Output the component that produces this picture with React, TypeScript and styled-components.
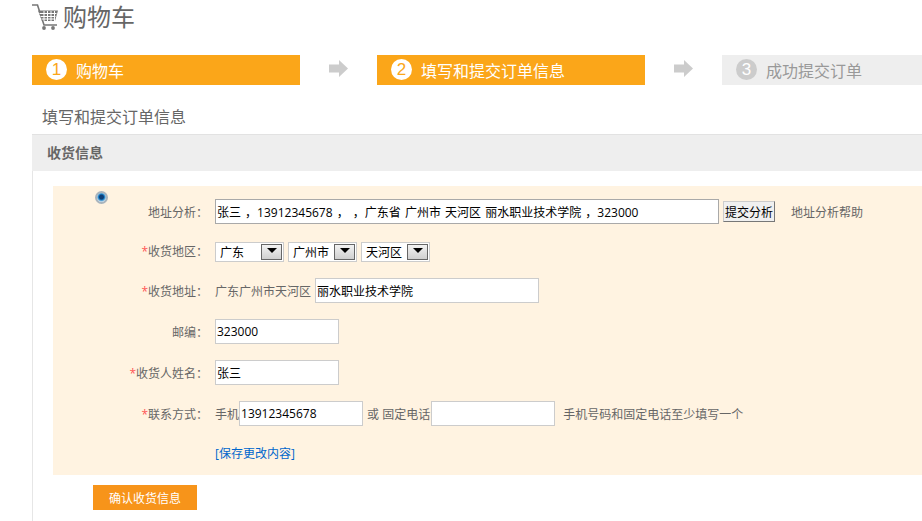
import React from 'react'
import styled, { createGlobalStyle } from 'styled-components'

const GlobalStyle = createGlobalStyle`
  html, body {
    margin: 0;
    height: 100%;
    overflow: hidden;
    background: #fff;
  }
  body {
    font-family: "Open Sans", "Noto Sans CJK SC", sans-serif;
    font-size: 12px;
    color: #666;
  }
`

const Page = styled.div`
  width: 1100px;
  height: 521px;
  padding-left: 32px;
  box-sizing: border-box;
  display: flex;
  flex-direction: column;
`

const TitleRow = styled.header`
  height: 55px;
  display: flex;
  align-items: flex-start;
  gap: 4px;
  padding-top: 4px;
  box-sizing: border-box;
`

const Title = styled.h1`
  margin: 0;
  font-size: 24px;
  line-height: 26px;
  font-weight: 400;
  color: #666;
`

const Steps = styled.nav`
  display: flex;
  height: 30px;
`

const Step = styled.div<{ $active?: boolean }>`
  width: 268px;
  display: flex;
  align-items: center;
  gap: 9px;
  padding-left: 14px;
  padding-bottom: 1px;
  box-sizing: border-box;
  font-size: 16px;
  background: ${(p) => (p.$active ? '#fba619' : '#eeeeee')};
  color: ${(p) => (p.$active ? '#fff' : '#999')};
`

const StepNumber = styled.span<{ $active?: boolean }>`
  width: 21px;
  height: 21px;
  border-radius: 50%;
  display: flex;
  align-items: center;
  justify-content: center;
  font-family: "Liberation Sans", sans-serif;
  font-size: 17px;
  background: ${(p) => (p.$active ? '#fff' : '#ccc')};
  color: ${(p) => (p.$active ? '#fba619' : '#fff')};
`

const StepArrow = styled.div`
  width: 77px;
  display: flex;
  align-items: center;
  justify-content: center;
  padding-bottom: 3px;
  box-sizing: border-box;
`

const SubTitle = styled.h2`
  margin: 0;
  height: 49px;
  padding: 22px 0 0 10px;
  box-sizing: border-box;
  font-size: 16px;
  line-height: 20px;
  font-weight: 400;
  color: #666;
`

const Section = styled.section`
  flex: 1;
  border-left: 1px solid #e6e6e6;
`

const SectionHeader = styled.div`
  height: 37px;
  margin-left: -1px;
  padding-left: 15px;
  box-sizing: border-box;
  border-top: 1px solid #e2e2e2;
  background: #eeeeee;
  font-size: 14px;
  font-weight: 700;
  line-height: 36px;
  color: #666;
`

const SectionBody = styled.div`
  padding: 15px 0 0 20px;
`

const Panel = styled.div`
  height: 289px;
  display: flex;
  background: #fff3e1;
`

const Radio = styled.span`
  flex: none;
  width: 13px;
  height: 13px;
  margin: 5px 0 0 42px;
  box-sizing: border-box;
  border-radius: 50%;
  border: 2px solid #a9b4bd;
  background: radial-gradient(circle at 50% 45%, #0f3f78 0 2px, #1c82c8 3px, #e8f0f5 5px);
`

const Form = styled.div`
  padding-top: 13px;
  display: flex;
  flex-direction: column;
  gap: 16px;
`

const Row = styled.div<{ $height?: number }>`
  display: flex;
  align-items: center;
  height: ${(p) => p.$height ?? 25}px;
`

const Label = styled.label`
  flex: none;
  width: 100px;
  margin-right: 7px;
  text-align: right;
  color: #666;
`

const Star = styled.span`
  color: #f55;
`

const Input = styled.input<{ $width: number; $dark?: boolean }>`
  width: ${(p) => p.$width}px;
  height: 25px;
  padding: 0 1px;
  box-sizing: border-box;
  border: 1px solid ${(p) => (p.$dark ? '#a9a9a9' : '#cccccc')};
  background: #fff;
  color: #000;
  font: inherit;
  word-spacing: 1px;
  outline: none;
`

const AnalyzeButton = styled.button`
  width: 52px;
  height: 21px;
  margin-left: 4px;
  padding: 3px 0 0;
  box-sizing: border-box;
  border: 1px solid #777;
  border-top-color: #ccc;
  border-left-color: #ccc;
  background: #f0f0f0;
  color: #000;
  font: inherit;
  line-height: 16px;
  overflow: hidden;
`

const Hint = styled.span<{ $left?: number; $right?: number }>`
  margin-left: ${(p) => p.$left ?? 0}px;
  margin-right: ${(p) => p.$right ?? 0}px;
  white-space: nowrap;
  color: #666;
`

const FakeSelect = styled.div`
  width: 69px;
  height: 20px;
  margin: 2px 4px 0 0;
  padding: 0 1px 0 4px;
  box-sizing: border-box;
  border: 1px solid #cccccc;
  background: #fff;
  color: #000;
  display: flex;
  align-items: center;
  justify-content: space-between;
`

const SelectArrow = styled.span`
  width: 21px;
  height: 16px;
  box-sizing: border-box;
  border: 1px solid #666;
  background: linear-gradient(#f2f2f2, #cfcfcf);
  display: flex;
  align-items: center;
  justify-content: center;
  padding-bottom: 3px;
  &::before {
    content: '';
    border-style: solid;
    border-width: 5px 5px 0;
    border-color: #000 transparent transparent;
  }
`

const SaveLink = styled.a`
  margin-left: 107px;
  color: #0066cc;
  text-decoration: none;
`

const ConfirmButton = styled.button`
  display: block;
  width: 104px;
  height: 25px;
  margin: 10px 0 0 40px;
  padding: 0;
  border: 0;
  background: #f7941a;
  color: #fff;
  font: inherit;
`

const CartIcon = () => (
  <svg width="27" height="26" viewBox="0 0 27 26" fill="none">
    <path d="M0 1h5.500L12 21h13" stroke="#777" strokeWidth="1.600" />
    <path d="M6 6.500h20l-3 10.500H10z" fill="#777" />
    <path
      d="M7.500 9.500h17M8.500 12.500h15M9.500 15h13M12 7v10M15.500 7v10M19 7v10M22.500 7v10"
      stroke="#fff"
      strokeWidth="1"
    />
    <circle cx="12" cy="24" r="1.900" fill="#777" />
    <circle cx="21" cy="24" r="1.900" fill="#777" />
  </svg>
)

const ArrowIcon = () => (
  <svg width="19" height="17" viewBox="0 0 19 17">
    <path d="M0 4.500h10V0l9 8.500-9 8.500v-4.500H0z" fill="#cccccc" />
  </svg>
)

const regions = ['广东', '广州市', '天河区']

export default function App() {
  return (
    <>
      <GlobalStyle />
      <Page>
        <TitleRow>
          <CartIcon />
          <Title>购物车</Title>
        </TitleRow>
        <Steps>
          <Step $active>
            <StepNumber $active>1</StepNumber>
            购物车
          </Step>
          <StepArrow>
            <ArrowIcon />
          </StepArrow>
          <Step $active>
            <StepNumber $active>2</StepNumber>
            填写和提交订单信息
          </Step>
          <StepArrow>
            <ArrowIcon />
          </StepArrow>
          <Step>
            <StepNumber>3</StepNumber>
            成功提交订单
          </Step>
        </Steps>
        <SubTitle>填写和提交订单信息</SubTitle>
        <Section>
          <SectionHeader>收货信息</SectionHeader>
          <SectionBody>
            <Panel>
              <Radio />
              <Form>
                <Row>
                  <Label>地址分析：</Label>
                  <Input
                    $width={504}
                    $dark
                    readOnly
                    value="张三 ，13912345678 ， ，广东省 广州市 天河区 丽水职业技术学院 ，323000"
                  />
                  <AnalyzeButton>提交分析</AnalyzeButton>
                  <Hint $left={16}>地址分析帮助</Hint>
                </Row>
                <Row $height={22}>
                  <Label>
                    <Star>*</Star>收货地区：
                  </Label>
                  {regions.map((name) => (
                    <FakeSelect key={name}>
                      {name}
                      <SelectArrow />
                    </FakeSelect>
                  ))}
                </Row>
                <Row>
                  <Label>
                    <Star>*</Star>收货地址：
                  </Label>
                  <Hint $right={4}>广东广州市天河区</Hint>
                  <Input $width={224} readOnly value="丽水职业技术学院" />
                </Row>
                <Row>
                  <Label>邮编：</Label>
                  <Input $width={124} readOnly value="323000" />
                </Row>
                <Row>
                  <Label>
                    <Star>*</Star>收货人姓名：
                  </Label>
                  <Input $width={124} readOnly value="张三" />
                </Row>
                <Row>
                  <Label>
                    <Star>*</Star>联系方式：
                  </Label>
                  <Hint>手机</Hint>
                  <Input $width={124} readOnly value="13912345678" />
                  <Hint $left={4} $right={1}>或 固定电话</Hint>
                  <Input $width={124} readOnly value="" />
                  <Hint $left={8}>手机号码和固定电话至少填写一个</Hint>
                </Row>
                <Row $height={22}>
                  <SaveLink href="#">[保存更改内容]</SaveLink>
                </Row>
              </Form>
            </Panel>
            <ConfirmButton>确认收货信息</ConfirmButton>
          </SectionBody>
        </Section>
      </Page>
    </>
  )
}
